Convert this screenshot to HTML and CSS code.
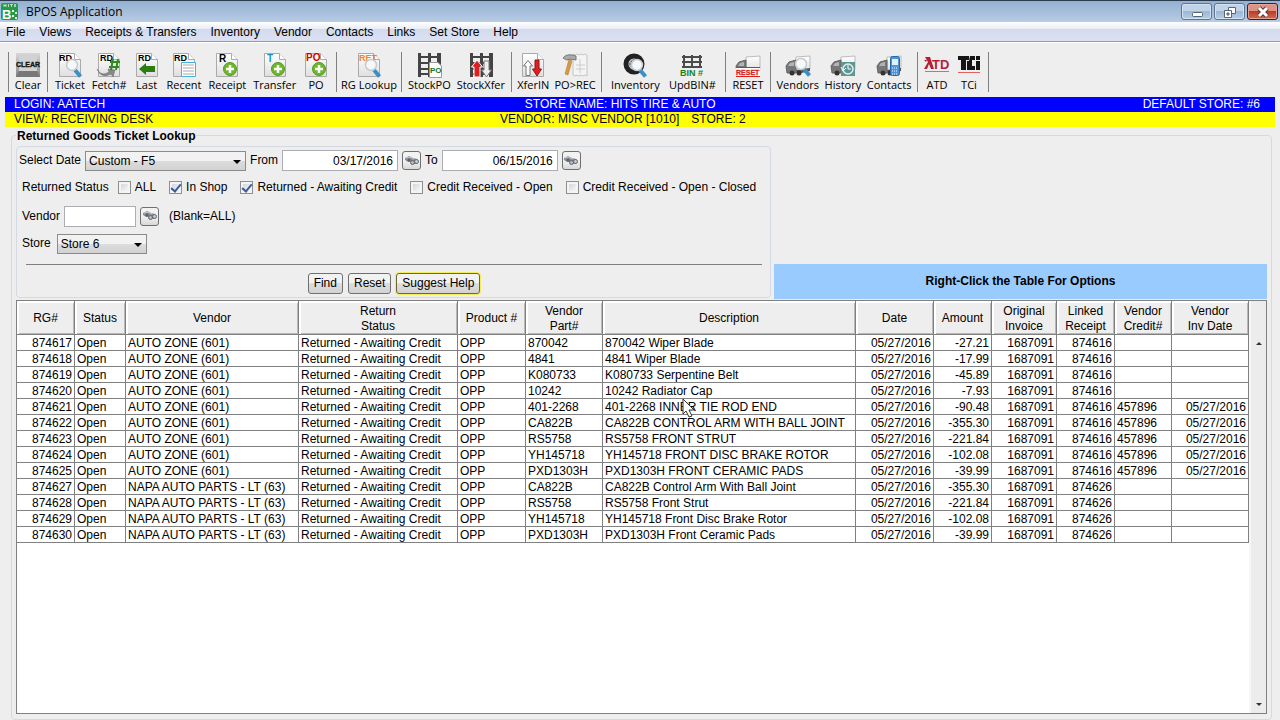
FILE: index.html
```html
<!DOCTYPE html>
<html lang="en">
<head>
    <meta charset="UTF-8">
    <meta name="viewport" content="width=device-width, initial-scale=1.0">
    <title>BPOS Application</title>
    <link rel="stylesheet" href="styles.css">
</head>
<body>
    <!-- shared icon parts -->
    <svg class="defs" aria-hidden="true">
        <defs>
            <linearGradient id="paper" x1="0" y1="0" x2="0" y2="1"><stop offset="0" stop-color="#fff"/><stop offset="1" stop-color="#dfdfdf"/></linearGradient>
            <linearGradient id="metal" x1="0" y1="0" x2="0" y2="1"><stop offset="0" stop-color="#d8d8d8"/><stop offset="1" stop-color="#858585"/></linearGradient>
            <symbol id="page" viewBox="0 0 26 26">
                <path d="M2.500 1.500H17.500L23.500 7.500V24.500H2.500Z" fill="url(#paper)" stroke="#aaa"/>
                <path d="M17.500 1.500V7.500H23.500" fill="#fff" stroke="#aaa"/>
            </symbol>
            <symbol id="lens" viewBox="0 0 26 26">
                <path d="M18 18L23.500 24.500" stroke="#3b8fc4" stroke-width="4"/>
                <circle cx="15" cy="13" r="5.500" fill="#f5f9fb" stroke="#c3cbd0" stroke-width="1.500"/>
            </symbol>
            <symbol id="plus" viewBox="0 0 26 26">
                <circle cx="16" cy="17" r="6.500" fill="#6cb82c" stroke="#559a1c"/>
                <path d="M16 13V21M12 17H20" stroke="#fff" stroke-width="2.500"/>
            </symbol>
            <symbol id="shelf" viewBox="0 0 26 26">
                <path d="M2 1H5V25H2ZM21 1H25V25H21ZM12 1H15V25H12Z" fill="#444"/>
                <path d="M3 5H23M3 11H23M3 17H23M3 22H23" stroke="#444" stroke-width="2"/>
            </symbol>
            <symbol id="truck" viewBox="0 0 26 26">
                <path d="M11 5L25 4V17L11 19Z" fill="url(#paper)" stroke="#bbb"/>
                <path d="M1 14L4 10L11 8V21H2Z" fill="#777" stroke="#666"/>
                <path d="M3 14L5 11L9 10V14Z" fill="#aeb4b7"/>
                <path d="M11 18L25 16V19L12 22Z" fill="#555"/>
                <circle cx="7" cy="21" r="2.500" fill="#333"/><circle cx="14" cy="21" r="2.500" fill="#333"/>
                <circle cx="21" cy="19" r="2" fill="#444"/>
            </symbol>
            <symbol id="arrowup" viewBox="0 0 10 16"><path d="M5 .5L9.500 6H7V15.500H3V6H.5Z"/></symbol>
            <symbol id="binoculars" viewBox="0 0 16 14">
                <path d="M1 4L5 2L9 4L13 5L13 10L9 10L7 8L4 8L1 6Z" fill="#8b8f94"/>
                <path d="M2 4L6 3L10 5" stroke="#c9cdd0" fill="none"/>
                <circle cx="5" cy="6" r="1.500" fill="#5b6066"/>
                <circle cx="8.500" cy="8.500" r="2" fill="#aeb9c4" stroke="#666"/><circle cx="12.500" cy="7.500" r="2" fill="#bccbdc" stroke="#666"/>
            </symbol>
        </defs>
    </svg>

    <div class="window">
        <header class="titlebar">
            <svg class="logo" viewBox="0 0 17 17"><rect width="17" height="17" rx="2" fill="#239b48"/><path d="M3 1V4M5 1V4M3 2.500H5M7.500 1V4M9 1.500H12M10.500 1V4M15 1.500H13.500V2.500H14.500V3.500H13" stroke="#d7f0de" stroke-width=".8" fill="none"/><text x="1" y="16" font-size="13" font-weight="bold" fill="#fff">B</text><path d="M11 7H13V9H11ZM14 9H16V11H14ZM11 12H13V14H11ZM14 14H16V16H14Z" fill="#e7f7eb"/></svg>
            <h1 class="title">BPOS Application</h1>
            <div class="winbtns">
                <button class="winbtn" aria-label="Minimize"><svg viewBox="0 0 14 12"><rect x="2.500" y="6.500" width="10" height="4" rx="1" fill="#fff" stroke="#566577"/></svg></button>
                <button class="winbtn" aria-label="Restore"><svg viewBox="0 0 14 12"><path d="M5.500 1.500H12.500V7.500H5.500Z" fill="#fff" stroke="#566577"/><path d="M1.500 4.500H8.500V11.500H1.500Z" fill="#fff" stroke="#566577"/><path d="M4 7H6V9H4Z" fill="#8fa9c5" stroke="#566577"/></svg></button>
                <button class="winbtn close" aria-label="Close"><svg viewBox="0 0 14 12"><path d="M3 2L11 10M11 2L3 10" stroke="#5c3b3b" stroke-width="5"/><path d="M3 2L11 10M11 2L3 10" stroke="#fff" stroke-width="3"/></svg></button>
            </div>
        </header>

        <nav class="menubar">
            <button>File</button>
            <button>Views</button>
            <button>Receipts &amp; Transfers</button>
            <button>Inventory</button>
            <button>Vendor</button>
            <button>Contacts</button>
            <button>Links</button>
            <button>Set Store</button>
            <button>Help</button>
        </nav>

        <div class="toolbar">
            <div class="group">
                <button class="tool"><svg viewBox="0 0 26 26"><path d="M1 1H25V25H1Z" fill="url(#metal)"/><path d="M4 3H22V19H4Z" fill="#d2d2d2"/><path d="M1 25L4 19H22L25 25Z" fill="#777"/><text x="1" y="15" font-size="7" font-weight="bold" fill="#111" stroke="#111" stroke-width=".3">CLEAR</text></svg>Clear</button>
            </div>
            <div class="group">
                <button class="tool"><svg viewBox="0 0 26 26"><use href="#page"/><text x="2" y="9" font-size="9" font-weight="bold">RD</text><use href="#lens"/></svg>Ticket</button>
                <button class="tool"><svg viewBox="0 0 26 26"><use href="#page"/><text x="4" y="9" font-size="9" font-weight="bold">RD</text><path d="M1 17Q5 25 13 20L12 17L19 18L17 25L15 22Q5 27 1 17Z" fill="#888" stroke="#666" stroke-width=".5"/><path d="M17 7L15 18M22 7L20 18M14 10H24M13 15H23" stroke="#2f8a1d" stroke-width="2"/></svg>Fetch#</button>
                <button class="tool"><svg viewBox="0 0 26 26"><use href="#page"/><text x="4" y="9" font-size="9" font-weight="bold">RD</text><path d="M5 17L12 11V14H21V20H12V23Z" fill="#2c7d10"/></svg>Last</button>
                <button class="tool"><svg viewBox="0 0 26 26"><use href="#page"/><text x="3" y="9" font-size="9" font-weight="bold">RD</text><path d="M10.500 10.500H24.500V24.500H10.500Z" fill="#fff" stroke="#43b4d8"/><path d="M12 13H23M12 16H23M12 19H23M12 22H23" stroke="#aaa"/></svg>Recent</button>
                <button class="tool"><svg viewBox="0 0 26 26"><use href="#page"/><text x="5" y="10" font-size="10" font-weight="bold">R</text><use href="#plus"/></svg>Receipt</button>
                <button class="tool"><svg viewBox="0 0 26 26"><use href="#page"/><text x="5" y="10" font-size="10" font-weight="bold" fill="#1597c9">T</text><use href="#plus"/></svg>Transfer</button>
                <button class="tool"><svg viewBox="0 0 26 26"><use href="#page"/><text x="3" y="9" font-size="10" font-weight="bold" fill="#d40000">PO</text><use href="#plus"/></svg>PO</button>
            </div>
            <div class="group">
                <button class="tool"><svg viewBox="0 0 26 26"><use href="#page"/><text x="3" y="9" font-size="9" font-weight="bold" fill="#ef8525">RET</text><use href="#lens"/></svg>RG Lookup</button>
            </div>
            <div class="group">
                <button class="tool"><svg viewBox="0 0 26 26"><use href="#shelf"/><path d="M13.500 10.500H22L25.500 14V25.500H13.500Z" fill="#fff" stroke="#999"/><text x="14" y="21" font-size="8" font-weight="bold" fill="#167416">PO</text></svg>StockPO</button>
                <button class="tool"><svg viewBox="0 0 26 26"><use href="#shelf"/><path d="M9 8L14.500 15H12V25H6V15H3.500Z" fill="#dd2020" stroke="#fff"/><path d="M18.500 25L13.500 18H16V9H21V18H23.500Z" fill="#eee" stroke="#777"/></svg>StockXfer</button>
            </div>
            <div class="group">
                <button class="tool"><svg viewBox="0 0 26 26"><use href="#page"/><use href="#arrowup" x="3" y="8" width="10" height="16" fill="#fff" stroke="#777"/><path d="M17 24L12.500 17H15V8H19V17H21.500Z" fill="#dd2020" stroke="#911"/></svg>XferIN</button>
                <button class="tool"><svg viewBox="0 0 26 26"><path d="M11 2L13 3L15 2L17 3L19 2L21 3L23 2L25 3V24L23 23L21 24L19 23L17 24L15 23L13 24L11 23Z" fill="#f4f4f4" stroke="#c4c4c4"/><path d="M14 13H23M14 17H23M18 7V21" stroke="#ccc"/><path d="M7 7L10 9L6 23L3 22Z" fill="#d59a45" stroke="#a97728" stroke-width=".5"/><path d="M1 6Q4 2 10 3L14 4V8L8 7L5 8Z" fill="#aaa" stroke="#777"/></svg>PO&gt;REC</button>
            </div>
            <div class="group">
                <button class="tool"><svg viewBox="0 0 26 26"><circle cx="12" cy="12" r="8" fill="none" stroke="#222" stroke-width="5"/><circle cx="12" cy="12" r="5" fill="#aaa"/><path d="M12 7V17M7 12H17M9 9L15 15" stroke="#555"/><use href="#lens"/></svg>Inventory</button>
                <button class="tool"><svg viewBox="0 0 26 26"><path d="M5 3V16M13 3V16M21 3V16M3 5H23M3 10H23M3 15H23" stroke="#4b4b4b" stroke-width="2"/><text x="1" y="24" font-size="9" font-weight="bold" fill="#168216">BIN #</text></svg>UpdBIN#</button>
            </div>
            <div class="group">
                <button class="tool"><svg viewBox="0 0 26 26"><use href="#truck"/><path d="M1 16H25V24H1Z" fill="#fff"/><path d="M1 15.500H25M1 24.500H25" stroke="#d22"/><text x="1" y="23" font-size="7" font-weight="bold" fill="#d22" stroke="#d22" stroke-width=".3">RESET</text></svg>RESET</button>
            </div>
            <div class="group">
                <button class="tool"><svg viewBox="0 0 26 26"><use href="#truck"/><use href="#lens" x="1" y="-1"/></svg>Vendors</button>
                <button class="tool"><svg viewBox="0 0 26 26"><use href="#truck"/><path d="M11 10H25V24H11Z" fill="#5d9791"/><circle cx="18" cy="17" r="5" fill="none" stroke="#dff1ef" stroke-width="1.500"/><path d="M18 13V17H21M11 15L13 19L16 16" stroke="#fff" fill="none"/></svg>History</button>
                <button class="tool"><svg viewBox="0 0 26 26"><use href="#truck"/><rect x="14.500" y="4.500" width="9" height="19" rx="2" fill="#4b94dc" stroke="#2167ac"/><path d="M16 7H22V13H16Z" fill="#e0f1fc"/><path d="M16 16H22M16 19H22M16 22H22" stroke="#fff" stroke-dasharray="1 1"/></svg>Contacts</button>
            </div>
            <div class="group">
                <button class="tool"><svg viewBox="0 0 26 26"><path d="M1 5H6L10 17H7L5 12L3 17H0L4 10ZM0 8H3L2 10Z" fill="#b61e38"/><text x="8" y="17" font-size="13" font-weight="bold" fill="#b61e38">TD</text><path d="M1 19.500H25" stroke="#8a86b4"/></svg>ATD</button>
                <button class="tool"><svg viewBox="0 0 26 26"><path d="M2 4H13V8H10V18H5V8H2ZM14 4H19V8H16V14H19V18H11V9H13ZM20 9H24V18H20ZM20 4H24V8H20Z" fill="#151515"/><path d="M2 20.500H24" stroke="#df6262"/></svg>TCi</button>
            </div>
        </div>

        <div class="bar login"><span>LOGIN: AATECH</span><span>STORE NAME: HITS TIRE &amp; AUTO</span><span>DEFAULT STORE: #6</span></div>
        <div class="bar view"><span>VIEW: RECEIVING DESK</span><span class="vendorstore"><span>VENDOR: MISC VENDOR [1010]</span><span>STORE: 2</span></span></div>

        <fieldset class="lookup">
            <legend>Returned Goods Ticket Lookup</legend>
            <div class="top">
                <form class="filters">
                    <div class="row dates">
                        <label for="range">Select Date</label>
                        <span class="pick range"><select id="range"><option>Custom - F5</option></select></span>
                        <label for="from">From</label>
                        <input class="field date" id="from" type="text" value="03/17/2016">
                        <button type="button" class="find" aria-label="Pick from date"><svg viewBox="0 0 16 14"><use href="#binoculars"/></svg></button>
                        <label for="to">To</label>
                        <input class="field date" id="to" type="text" value="06/15/2016">
                        <button type="button" class="find" aria-label="Pick to date"><svg viewBox="0 0 16 14"><use href="#binoculars"/></svg></button>
                    </div>
                    <div class="row status">
                        <span>Returned Status</span>
                        <label><input type="checkbox">ALL</label>
                        <label><input type="checkbox" checked>In Shop</label>
                        <label><input type="checkbox" checked>Returned - Awaiting Credit</label>
                        <label><input type="checkbox">Credit Received - Open</label>
                        <label><input type="checkbox">Credit Received - Open - Closed</label>
                    </div>
                    <div class="row vendor">
                        <label for="vendor">Vendor</label>
                        <input class="field" id="vendor" type="text">
                        <button type="button" class="find" aria-label="Find vendor"><svg viewBox="0 0 16 14"><use href="#binoculars"/></svg></button>
                        <span class="hint">(Blank=ALL)</span>
                    </div>
                    <div class="row store">
                        <label for="store">Store</label>
                        <span class="pick"><select id="store"><option>Store 6</option></select></span>
                    </div>
                    <div class="actions">
                        <button type="button">Find</button>
                        <button type="button">Reset</button>
                        <button type="button" class="suggest">Suggest Help</button>
                    </div>
                </form>
                <div class="notice">Right-Click the Table For Options</div>
            </div>

            <div class="tablebox">
                <table>
                    <colgroup>
                        <col class="w58"><col class="w51"><col class="w173"><col class="w159"><col class="w68"><col class="w77"><col><col class="w78"><col class="w58"><col class="w65"><col class="w58"><col class="w57"><col class="w77">
                    </colgroup>
                    <thead>
                        <tr><th>RG#</th><th>Status</th><th>Vendor</th><th>Return<br>Status</th><th>Product #</th><th>Vendor<br>Part#</th><th>Description</th><th>Date</th><th>Amount</th><th>Original<br>Invoice</th><th>Linked<br>Receipt</th><th>Vendor<br>Credit#</th><th>Vendor<br>Inv Date</th></tr>
                    </thead>
                    <tbody>
                        <tr><td>874617</td><td>Open</td><td>AUTO ZONE (601)</td><td>Returned - Awaiting Credit</td><td>OPP</td><td>870042</td><td>870042 Wiper Blade</td><td>05/27/2016</td><td>-27.21</td><td>1687091</td><td>874616</td><td></td><td></td></tr>
                        <tr><td>874618</td><td>Open</td><td>AUTO ZONE (601)</td><td>Returned - Awaiting Credit</td><td>OPP</td><td>4841</td><td>4841 Wiper Blade</td><td>05/27/2016</td><td>-17.99</td><td>1687091</td><td>874616</td><td></td><td></td></tr>
                        <tr><td>874619</td><td>Open</td><td>AUTO ZONE (601)</td><td>Returned - Awaiting Credit</td><td>OPP</td><td>K080733</td><td>K080733 Serpentine Belt</td><td>05/27/2016</td><td>-45.89</td><td>1687091</td><td>874616</td><td></td><td></td></tr>
                        <tr><td>874620</td><td>Open</td><td>AUTO ZONE (601)</td><td>Returned - Awaiting Credit</td><td>OPP</td><td>10242</td><td>10242 Radiator Cap</td><td>05/27/2016</td><td>-7.93</td><td>1687091</td><td>874616</td><td></td><td></td></tr>
                        <tr><td>874621</td><td>Open</td><td>AUTO ZONE (601)</td><td>Returned - Awaiting Credit</td><td>OPP</td><td>401-2268</td><td>401-2268 INNER TIE ROD END</td><td>05/27/2016</td><td>-90.48</td><td>1687091</td><td>874616</td><td>457896</td><td>05/27/2016</td></tr>
                        <tr><td>874622</td><td>Open</td><td>AUTO ZONE (601)</td><td>Returned - Awaiting Credit</td><td>OPP</td><td>CA822B</td><td>CA822B CONTROL ARM WITH BALL JOINT</td><td>05/27/2016</td><td>-355.30</td><td>1687091</td><td>874616</td><td>457896</td><td>05/27/2016</td></tr>
                        <tr><td>874623</td><td>Open</td><td>AUTO ZONE (601)</td><td>Returned - Awaiting Credit</td><td>OPP</td><td>RS5758</td><td>RS5758 FRONT STRUT</td><td>05/27/2016</td><td>-221.84</td><td>1687091</td><td>874616</td><td>457896</td><td>05/27/2016</td></tr>
                        <tr><td>874624</td><td>Open</td><td>AUTO ZONE (601)</td><td>Returned - Awaiting Credit</td><td>OPP</td><td>YH145718</td><td>YH145718 FRONT DISC BRAKE ROTOR</td><td>05/27/2016</td><td>-102.08</td><td>1687091</td><td>874616</td><td>457896</td><td>05/27/2016</td></tr>
                        <tr><td>874625</td><td>Open</td><td>AUTO ZONE (601)</td><td>Returned - Awaiting Credit</td><td>OPP</td><td>PXD1303H</td><td>PXD1303H FRONT CERAMIC PADS</td><td>05/27/2016</td><td>-39.99</td><td>1687091</td><td>874616</td><td>457896</td><td>05/27/2016</td></tr>
                        <tr><td>874627</td><td>Open</td><td>NAPA AUTO PARTS - LT (63)</td><td>Returned - Awaiting Credit</td><td>OPP</td><td>CA822B</td><td>CA822B Control Arm With Ball Joint</td><td>05/27/2016</td><td>-355.30</td><td>1687091</td><td>874626</td><td></td><td></td></tr>
                        <tr><td>874628</td><td>Open</td><td>NAPA AUTO PARTS - LT (63)</td><td>Returned - Awaiting Credit</td><td>OPP</td><td>RS5758</td><td>RS5758 Front Strut</td><td>05/27/2016</td><td>-221.84</td><td>1687091</td><td>874626</td><td></td><td></td></tr>
                        <tr><td>874629</td><td>Open</td><td>NAPA AUTO PARTS - LT (63)</td><td>Returned - Awaiting Credit</td><td>OPP</td><td>YH145718</td><td>YH145718 Front Disc Brake Rotor</td><td>05/27/2016</td><td>-102.08</td><td>1687091</td><td>874626</td><td></td><td></td></tr>
                        <tr><td>874630</td><td>Open</td><td>NAPA AUTO PARTS - LT (63)</td><td>Returned - Awaiting Credit</td><td>OPP</td><td>PXD1303H</td><td>PXD1303H Front Ceramic Pads</td><td>05/27/2016</td><td>-39.99</td><td>1687091</td><td>874626</td><td></td><td></td></tr>
                    </tbody>
                </table>
                <div class="scroll">
                    <div class="corner"></div>
                    <button class="arrow up" aria-label="Scroll up"></button>
                    <button class="arrow down" aria-label="Scroll down"></button>
                </div>
            </div>
        </fieldset>
    </div>

    <svg class="cursor" viewBox="0 0 14 20"><path d="M1 1V16L4 13L7 19L10 18L7 12H12Z" fill="#fff" stroke="#333"/></svg>
</body>
</html>
```

FILE: styles.css
```css
*{
    box-sizing: border-box;
}
html,body{
    height: 100%;
    margin: 0;
}
body{
    background: #eee;
    color: #000;
    font: 12px/15px "Liberation Sans", Arial, sans-serif;
    overflow: hidden;
}
button,input,select{
    font: inherit;
    color: inherit;
    margin: 0;
}
button{
    padding: 0;
    border: 0;
    background: none;
    white-space: nowrap;
}
.defs{
    position: absolute;
    width: 0;
    height: 0;
}
.window{
    display: grid;
    grid-template-rows: auto auto auto auto auto 1fr;
    height: 100%;
}

/* title bar */
.titlebar{
    display: flex;
    align-items: center;
    gap: 8px;
    height: 22px;
    padding: 0 2px 0 1px;
    border-top: 1px solid #2b3a4c;
    background: linear-gradient(#94b0d1, #b7cce5);
}
.logo{
    width: 17px;
    height: 17px;
}
.title{
    flex: 1;
    margin: 0;
    font: 12px/18px "Open Sans", "Noto Sans", sans-serif;
}
.winbtns{
    display: flex;
    gap: 2px;
}
.winbtn{
    display: flex;
    align-items: center;
    justify-content: center;
    width: 31px;
    height: 17px;
    border: 1px solid #5d7590;
    border-radius: 3px;
    box-shadow: inset 0 0 0 1px #d4e2f1;
    background: linear-gradient(#c0d3e8 50%, #9cb8d6 50%, #b6cde5);
}
.winbtn svg{
    width: 14px;
    height: 12px;
}
.close{
    border-color: #4d1a1a;
    box-shadow: inset 0 0 0 1px #e5a497;
    background: linear-gradient(#dd9384 50%, #bd3b26 50%, #d06c50);
}

/* menu */
.menubar{
    display: flex;
    gap: 14px;
    height: 20px;
    padding: 1px 6px 0;
    border-bottom: 1px solid #9a9a9a;
    background: linear-gradient(#fff, #e9edf7 35%, #d3daed 36%, #dce2f2);
}

/* toolbar */
.toolbar{
    display: grid;
    grid-template-columns: 39px 289px 65px 110px 90px 124px 45px 147px 72px;
    height: 55px;
    padding: 9px 8px 5px;
    border-top: 1px solid #fff;
}
.group{
    display: flex;
    justify-content: space-evenly;
    border-left: 1px solid #808080;
}
.group:last-child{
    border-right: 1px solid #808080;
}
.tool{
    display: flex;
    flex-direction: column;
    align-items: center;
    min-width: 26px;
    font: 11px/14px "Open Sans", Tahoma, sans-serif;
}
.tool svg{
    width: 26px;
    height: 26px;
    font-family: "Liberation Sans", Arial, sans-serif;
}

/* info bars */
.bar{
    display: grid;
    grid-template-columns: 41% auto 1fr;
    height: 15px;
    margin: 0 5px;
    padding: 0 15px 0 9px;
}
.login{
    background: #00f;
    color: #fff;
}
.login > :last-child{
    text-align: right;
}
.view{
    grid-template-columns: 39% auto;
    background: #ff0;
}
.vendorstore{
    display: flex;
    gap: 12px;
}

/* lookup panel */
.lookup{
    display: flex;
    flex-direction: column;
    min-width: 0;
    margin: 1px 8px 0 11px;
    padding: 3px 4px 5px;
    border: 1px solid #d5dae2;
    border-radius: 4px;
}
.lookup legend{
    padding: 1px 1px 0;
    line-height: 14px;
    font-weight: bold;
}
.top{
    display: flex;
    align-items: flex-end;
    gap: 3px;
    margin-bottom: 1px;
}
.filters{
    width: 755px;
    margin-bottom: 1px;
    padding: 3px 2px;
    border: 1px solid #d5dae2;
    border-radius: 4px;
}
.row{
    display: flex;
    align-items: center;
    gap: 4px;
    padding-left: 3px;
    white-space: nowrap;
}
.dates{
    height: 21px;
    padding-left: 0;
}
.status{
    gap: 13px;
    height: 32px;
}
.status span{
    margin-right: -4px;
}
.status label{
    display: flex;
    align-items: center;
    gap: 4px;
}
.status input{
    appearance: none;
    display: grid;
    place-items: center;
    width: 13px;
    height: 13px;
    border: 1px solid #8e8f8f;
    box-shadow: inset 0 0 0 2px #f4f4f4;
    background: linear-gradient(135deg, #c9ced5, #fff);
}
.status input:checked::after{
    content: "";
    width: 4px;
    height: 8px;
    border: solid #3d5c99;
    border-width: 0 2px 2px 0;
    transform: rotate(40deg);
}
.vendor{
    height: 26px;
}
.store{
    gap: 6px;
    height: 29px;
}
.field{
    width: 72px;
    height: 21px;
    padding: 0 4px;
    border: 1px solid #abadb3;
    background: #fff;
}
.date{
    width: 116px;
    text-align: right;
}
.find{
    display: grid;
    place-items: center;
    width: 19px;
    height: 19px;
    border: 1px solid #707070;
    border-radius: 3px;
    background: linear-gradient(#f2f2f2 50%, #d8d8d8);
}
.find svg{
    width: 16px;
    height: 14px;
}
.pick{
    position: relative;
    width: 90px;
    height: 20px;
}
.range{
    width: 161px;
}
.pick select{
    appearance: none;
    width: 100%;
    height: 100%;
    padding: 1px 3px 0;
    border: 1px solid #8b8b8b;
    border-radius: 0;
    background: linear-gradient(#f2f2f2 50%, #dcdcdc 50%, #d2d2d2);
}
.pick::after{
    content: "";
    position: absolute;
    top: 9px;
    right: 5px;
    border: 4px solid transparent;
    border-top-color: #000;
    border-bottom: 0;
    pointer-events: none;
}
.hint{
    margin-left: 6px;
}
.actions{
    display: flex;
    justify-content: center;
    gap: 5px;
    margin: 6px 6px 0 7px;
    padding-top: 8px;
    border-top: 1px solid #808080;
}
.actions button{
    height: 21px;
    padding: 0 5px;
    border: 1px solid #707070;
    border-radius: 3px;
    background: linear-gradient(#f2f2f2 50%, #ddd 50%, #d2d2d2);
}
.actions .suggest{
    border-color: #6f6a2c;
    box-shadow: 0 0 0 1px #f3ec5c;
}
.notice{
    flex: 1;
    height: 35px;
    background: #99cbff;
    font-weight: bold;
    line-height: 35px;
    text-align: center;
}

/* results */
.tablebox{
    display: flex;
    flex: 1;
    align-items: flex-start;
    border: 1px solid #808080;
    background: #fff;
}
table{
    flex: 1;
    width: 0;
    border-collapse: separate;
    border-spacing: 0;
    table-layout: fixed;
}
th,td{
    overflow: hidden;
    border-right: 1px solid #808080;
    border-bottom: 1px solid #808080;
    white-space: nowrap;
}
th{
    height: 34px;
    padding: 2px 2px 0;
    background: #eee;
    box-shadow: inset 2px 2px #fff, inset -1px -1px #b8b8b8;
    font-weight: normal;
}
td{
    height: 16px;
    padding: 1px 2px 0;
    line-height: 14px;
}
td:nth-child(1),td:nth-child(8),td:nth-child(9),td:nth-child(10),td:nth-child(11),td:nth-child(13){
    text-align: right;
}
.w51{ width: 51px; }
.w57{ width: 57px; }
.w58{ width: 58px; }
.w65{ width: 65px; }
.w68{ width: 68px; }
.w77{ width: 77px; }
.w78{ width: 78px; }
.w159{ width: 159px; }
.w173{ width: 173px; }
.scroll{
    display: flex;
    flex-direction: column;
    align-self: stretch;
    width: 17px;
    border-left: 2px solid #f7f7f7;
    background: #ececec;
}
.corner{
    height: 34px;
}
.arrow{
    display: grid;
    place-items: center;
    height: 17px;
}
.arrow::before{
    content: "";
    border: 3px solid transparent;
}
.up::before{
    border-top: 0;
    border-bottom-color: #333;
}
.down{
    margin-top: auto;
}
.down::before{
    border-bottom: 0;
    border-top-color: #333;
}

.cursor{
    position: absolute;
    left: 682px;
    top: 398px;
    width: 14px;
    height: 20px;
}
```
